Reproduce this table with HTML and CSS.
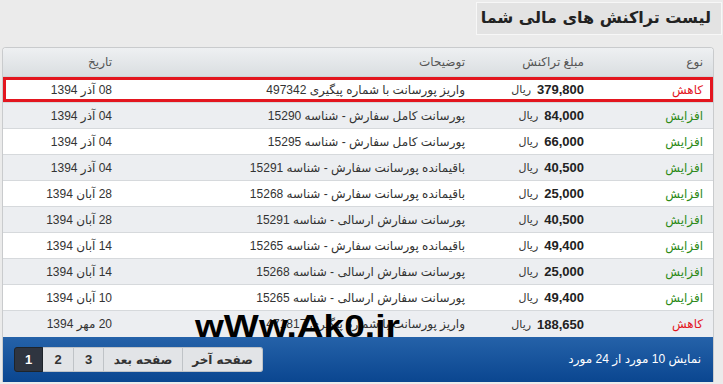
FILE: index.html
```html
<!DOCTYPE html>
<html lang="fa" dir="rtl">
<head>
<meta charset="utf-8">
<title>لیست تراکنش های مالی شما</title>
<link rel="stylesheet" href="styles.css">
</head>
<body>
<div class="page">
  <div class="title-row">
    <h1 class="title">لیست تراکنش های مالی شما</h1>
  </div>
  <div class="panel">
    <div class="row head">
      <div class="cell">نوع</div>
      <div class="cell">مبلغ تراکنش</div>
      <div class="cell">توضیحات</div>
      <div class="cell">تاریخ</div>
    </div>
    <div class="row selected">
      <div class="cell dec">کاهش</div>
      <div class="cell amount"><b class="num">379,800</b><span class="cur">ریال</span></div>
      <div class="cell">واریز پورسانت با شماره پیگیری 497342</div>
      <div class="cell">08 آذر 1394</div>
    </div>
    <div class="row alt">
      <div class="cell inc">افزایش</div>
      <div class="cell amount"><b class="num">84,000</b><span class="cur">ریال</span></div>
      <div class="cell">پورسانت کامل سفارش - شناسه 15290</div>
      <div class="cell">04 آذر 1394</div>
    </div>
    <div class="row">
      <div class="cell inc">افزایش</div>
      <div class="cell amount"><b class="num">66,000</b><span class="cur">ریال</span></div>
      <div class="cell">پورسانت کامل سفارش - شناسه 15295</div>
      <div class="cell">04 آذر 1394</div>
    </div>
    <div class="row alt">
      <div class="cell inc">افزایش</div>
      <div class="cell amount"><b class="num">40,500</b><span class="cur">ریال</span></div>
      <div class="cell">باقیمانده پورسانت سفارش - شناسه 15291</div>
      <div class="cell">04 آذر 1394</div>
    </div>
    <div class="row">
      <div class="cell inc">افزایش</div>
      <div class="cell amount"><b class="num">25,000</b><span class="cur">ریال</span></div>
      <div class="cell">باقیمانده پورسانت سفارش - شناسه 15268</div>
      <div class="cell">28 آبان 1394</div>
    </div>
    <div class="row alt">
      <div class="cell inc">افزایش</div>
      <div class="cell amount"><b class="num">40,500</b><span class="cur">ریال</span></div>
      <div class="cell">پورسانت سفارش ارسالی - شناسه 15291</div>
      <div class="cell">28 آبان 1394</div>
    </div>
    <div class="row">
      <div class="cell inc">افزایش</div>
      <div class="cell amount"><b class="num">49,400</b><span class="cur">ریال</span></div>
      <div class="cell">باقیمانده پورسانت سفارش - شناسه 15265</div>
      <div class="cell">14 آبان 1394</div>
    </div>
    <div class="row alt">
      <div class="cell inc">افزایش</div>
      <div class="cell amount"><b class="num">25,000</b><span class="cur">ریال</span></div>
      <div class="cell">پورسانت سفارش ارسالی - شناسه 15268</div>
      <div class="cell">14 آبان 1394</div>
    </div>
    <div class="row">
      <div class="cell inc">افزایش</div>
      <div class="cell amount"><b class="num">49,400</b><span class="cur">ریال</span></div>
      <div class="cell">پورسانت سفارش ارسالی - شناسه 15265</div>
      <div class="cell">10 آبان 1394</div>
    </div>
    <div class="row alt last">
      <div class="cell dec">کاهش</div>
      <div class="cell amount"><b class="num">188,650</b><span class="cur">ریال</span></div>
      <div class="cell">واریز پورسانت با شماره پیگیری 471817</div>
      <div class="cell">20 مهر 1394</div>
    </div>
    <div class="footer">
      <div class="info">نمایش 10 مورد از 24 مورد</div>
      <div class="pager">
        <span class="btn active w1">1</span>
        <span class="btn w2">2</span>
        <span class="btn w3">3</span>
        <span class="btn wn">صفحه بعد</span>
        <span class="btn wl">صفحه آخر</span>
      </div>
    </div>
  </div>
  <div class="watermark">wWw.Ak0.ir</div>
</div>
</body>
</html>
```
FILE: styles.css
```css
* { box-sizing: border-box; }
html, body {
  margin: 0;
  padding: 0;
  background: #ebebeb;
  height: 384px;
  overflow: hidden;
}
body {
  font-family: "Liberation Sans", "DejaVu Sans", sans-serif;
  font-size: 12px;
  color: #333;
}
.page {
  position: relative;
  padding: 2px 0 0 0;
}
.title-row {
  display: flex;
  justify-content: flex-start;
  padding-right: 1px;
}
.title {
  margin: 0;
  height: 33px;
  width: 246px;
  padding: 0 10px 0 0;
  background: #e3e3e3;
  border: 1px solid #f7f7f7;
  font-family: "DejaVu Sans", sans-serif;
  font-size: 16px;
  font-weight: bold;
  color: #222;
  line-height: 30px;
  text-align: right;
}
.panel {
  margin: 12px 9px 0 2px;
  border: 1px solid #c9cbcd;
  border-bottom: none;
  border-radius: 4px 4px 0 0;
  overflow: hidden;
  background: #fff;
}
.row {
  display: grid;
  grid-template-columns: 119px 119px 1fr 119px;
  height: 26px;
  border-bottom: 1px solid #d6d9dc;
  background: #fff;
}
.row.alt { background: #eceef1; }
.row.last { border-bottom: none; }
.row.head {
  height: 29px;
  border-bottom: 1px solid #cfd3d6;
  background: linear-gradient(#eef0f2, #dadee1);
  color: #555;
}
.row.head .cell { font-size: 12px; }
.row.selected {
  box-shadow: inset 0 0 0 3px #e3161f;
}
.cell {
  display: flex;
  align-items: center;
  justify-content: flex-start;
  padding-right: 10px;
  white-space: nowrap;
  overflow: hidden;
}
.dec { color: #e3161f; }
.inc { color: #2c8a18; }
.amount { gap: 6px; }
.num {
  font-family: "Liberation Sans", sans-serif;
  font-size: 13px;
  font-weight: bold;
  color: #222;
  direction: ltr;
}
.cur { font-size: 11px; color: #333; }
.footer {
  height: 45px;
  background: linear-gradient(#2562a9, #0a4690);
  display: flex;
  justify-content: space-between;
  align-items: flex-start;
  padding: 10px 0 0 11px;
  color: #fff;
}
.info {
  padding-right: 12px;
  line-height: 24px;
  font-size: 12px;
}
.pager {
  display: flex;
  direction: ltr;
}
.btn {
  height: 25px;
  display: flex;
  align-items: center;
  justify-content: center;
  background: #e2e4e7;
  color: #333;
  font-weight: bold;
  font-size: 13px;
  border: 1px solid #bfc3c7;
  border-left: none;
}
.btn:first-child { border-left: 1px solid #1e242b; border-radius: 3px 0 0 3px; }
.btn:last-child { border-radius: 0 3px 3px 0; }
.btn.active { background: #2f3540; color: #fff; border-color: #1e242b; }
.w1 { width: 29px; }
.w2 { width: 31px; }
.w3 { width: 30px; }
.wn { width: 79px; font-size: 12px; font-family: "DejaVu Sans", sans-serif; }
.wl { width: 80px; font-size: 12px; font-family: "DejaVu Sans", sans-serif; }
.watermark {
  position: absolute;
  left: 195px;
  top: 310px;
  font-family: "Liberation Sans", sans-serif;
  font-weight: bold;
  font-size: 32px;
  line-height: 32px;
  color: #000;
  direction: ltr;
  transform: scaleX(1.16);
  transform-origin: left top;
}
```
